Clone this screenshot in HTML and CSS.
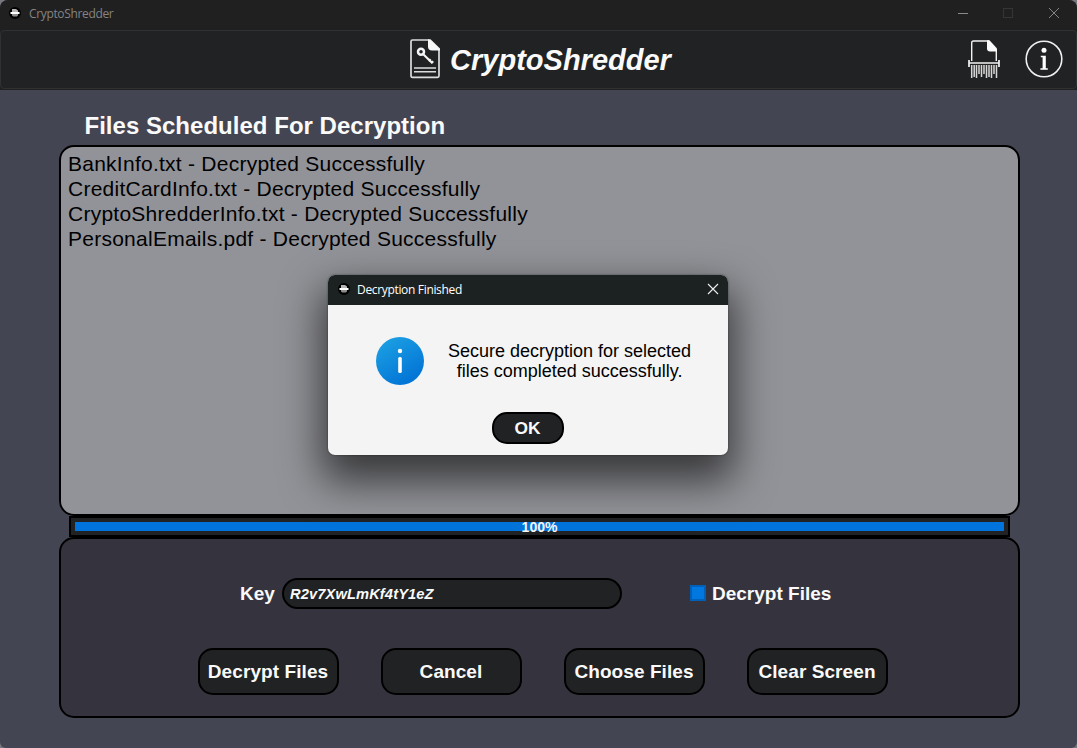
FILE: index.html
```html
<!DOCTYPE html>
<html lang="en">
<head>
<meta charset="utf-8">
<title>CryptoShredder</title>
<link rel="stylesheet" href="styles.css">
</head>
<body>
<svg class="defs" width="0" height="0">
  <symbol id="app-icon" viewBox="0 0 12 12">
    <circle cx="6" cy="6" r="6" fill="#000"/>
    <path d="M3 2h4l2 1.500V5H3z" fill="#b5b5b5"/>
    <path d="M1.500 5h9v2h-9z" fill="#fff"/>
    <path d="M3 7h6v1.500L7.800 9.500H4.200L3 8.500z" fill="#8d8d8d"/>
  </symbol>
</svg>
<div class="window">
  <div class="titlebar">
    <svg class="app-icon"><use href="#app-icon"/></svg>
    <span class="titlebar-text">CryptoShredder</span>
    <svg class="controls" width="104" height="14" viewBox="0 0 104 14" fill="none">
      <path d="M1 7.500h10" stroke="#8a8a8a"/>
      <rect x="46.500" y="2.500" width="9" height="9" stroke="#353535"/>
      <path d="M92 2l10 10M102 2l-10 10" stroke="#858585"/>
    </svg>
  </div>
  <div class="header-wrap">
  <header class="header">
    <div class="brand">
      <svg width="30" height="40" viewBox="0 0 30 40" fill="none">
        <path d="M19 1H2.500Q1 1 1 2.500v34Q1 38.300 2.500 38.300h25q1.500 0 1.500-1.500V11" stroke="#dcdcdc" stroke-width="1.700"/>
        <path d="M18 .3h2.500L30 9.500V11.500h-8q-4 0-4-4z" fill="#f7f7f7"/>
        <circle cx="11" cy="12.800" r="3" stroke="#f4f4f4" stroke-width="2.500"/>
        <path d="M13 15l9.500 9.300M18.700 22.300l2-2M21.200 24.300l2-2" stroke="#f4f4f4" stroke-width="2.100"/>
        <path d="M4 29.100h22M4 32.800h22" stroke="#ddd" stroke-width="1.500"/>
      </svg>
      <h1 class="brand-name">CryptoShredder</h1>
    </div>
    <div class="header-actions">
      <svg width="32" height="38" viewBox="0 0 32 38" fill="none">
        <path d="M3.700 21V3Q3.700 1 5.500 1H21M28.300 10v11" stroke="#f2f2f2" stroke-width="1.400"/>
        <path d="M19 .3h2.500L29 8.500v3h-7q-3 0-3-3z" fill="#fafafa"/>
        <path d="M1 23h30M1 20v7M31 20v7" stroke="#f4f4f4" stroke-width="1.700"/>
        <path d="M3.700 25v13M6.200 25v12M8.500 25v13M11 25v9M13.500 25v12M16 25v9M18.500 25v13M21 25v12M23.500 25v13M26 25v9M28.500 25v13" stroke="#d8d8d8" stroke-width="1.500"/>
      </svg>
      <svg width="38" height="38" viewBox="0 0 38 38" fill="none">
        <circle cx="19" cy="19" r="17.800" stroke="#f0f0f0" stroke-width="1.600"/>
        <circle cx="19" cy="10.200" r="2.500" fill="#fff"/>
        <path d="M15.800 15.800h5v12.500h2v1.500h-7.400v-1.500h2.200V17.300h-1.800z" fill="#fff"/>
      </svg>
    </div>
  </header>
  </div>
  <main class="content">
    <h2 class="heading">Files Scheduled For Decryption</h2>
    <ul class="file-list">
      <li>BankInfo.txt - Decrypted Successfully</li>
      <li>CreditCardInfo.txt - Decrypted Successfully</li>
      <li>CryptoShredderInfo.txt - Decrypted Successfully</li>
      <li>PersonalEmails.pdf - Decrypted Successfully</li>
    </ul>
    <div class="progress"><div class="progress-fill">100%</div></div>
    <section class="panel">
      <div class="key-row">
        <span class="label key-label">Key</span>
        <div class="key-input">R2v7XwLmKf4tY1eZ</div>
        <span class="checkbox"></span>
        <span class="label check-label">Decrypt Files</span>
      </div>
      <div class="buttons">
        <button class="button">Decrypt Files</button>
        <button class="button">Cancel</button>
        <button class="button">Choose Files</button>
        <button class="button">Clear Screen</button>
      </div>
    </section>
  </main>
  <div class="dialog">
    <div class="dialog-title">
      <svg class="app-icon"><use href="#app-icon"/></svg>
      <span class="dialog-name">Decryption Finished</span>
      <svg class="dialog-close" width="12" height="12" viewBox="0 0 12 12"><path d="M1 1l10 10M11 1L1 11" stroke="#eee" stroke-width="1.100"/></svg>
    </div>
    <div class="dialog-body">
      <div class="message">
        <svg width="48" height="48" viewBox="0 0 48 48">
          <defs><linearGradient id="blue" x1=".2" y1="0" x2=".8" y2="1"><stop stop-color="#1ca0e3"/><stop offset="1" stop-color="#0070d4"/></linearGradient></defs>
          <circle cx="24" cy="24" r="24" fill="url(#blue)"/>
          <circle cx="24" cy="14" r="2.200" fill="#fff"/>
          <rect x="22.200" y="20" width="3.600" height="16" rx="1.500" fill="#fff"/>
        </svg>
        <p class="message-text">Secure decryption for selected<br>files completed successfully.</p>
      </div>
      <button class="button ok">OK</button>
    </div>
  </div>
</div>
</body>
</html>
```
FILE: styles.css
```css
* { box-sizing: border-box; }
body { margin: 0; background: #77777d; font-family: "Liberation Sans", Arial, sans-serif; }
h1, h2, p, ul { margin: 0; padding: 0; }
svg { display: block; flex: none; }
.defs { position: absolute; }
.window { position: relative; width: 1077px; height: 748px; overflow: hidden; border-radius: 8px 8px 6px 6px; background: #444552; white-space: nowrap; }
.titlebar { display: flex; align-items: center; height: 30px; padding: 0 16px 4px 9px; background: #202020; }
.app-icon { width: 12px; height: 12px; }
.titlebar-text { margin-left: 8px; font: 12px "Open Sans", sans-serif; letter-spacing: -.35px; color: #848484; }
.controls { margin-left: auto; }
.header-wrap { height: 60px; background: #202020; }
.header { position: relative; display: flex; justify-content: center; height: 59px; padding: 8px 0 0 5px; background: #202224; border: 1px solid #303133; border-radius: 4px; }
.brand { display: flex; gap: 10px; margin-right: 1px; }
.brand-name { font-size: 29px; line-height: 42px; font-style: italic; color: #fafafa; }
.header-actions { position: absolute; right: 13px; top: 9px; display: flex; gap: 25px; }
.content { padding: 20px 57px 0 59px; }
.heading { margin-left: 25.500px; height: 35px; font-size: 24px; letter-spacing: .02px; line-height: 32px; color: #fafafa; }
.file-list { height: 371px; padding: 4px 7px; list-style: none; border: 2px solid #000; border-radius: 15px; background: #929398; font-size: 21px; letter-spacing: .25px; line-height: 25px; color: #000; }
.progress { height: 21px; margin: 0 10px; padding: 4px; background: #202224; border: 2px solid #000; }
.progress-fill { height: 9px; background: #0074dc; color: #f6f6f6; font-size: 14px; font-weight: bold; line-height: 10px; text-align: center; }
.panel { height: 181px; padding: 39px 0 0 137px; background: #35343e; border: 2px solid #000; border-radius: 15px; }
.key-row { display: flex; align-items: center; height: 31px; margin-left: 42px; }
.label { font-size: 19px; font-weight: bold; color: #fafafa; }
.key-label { width: 42px; }
.key-input { width: 340px; height: 31px; padding-left: 6px; border: 2px solid #000; border-radius: 16px; background: #202224; color: #fafafa; font-size: 14.670px; letter-spacing: .12px; font-style: italic; font-weight: bold; line-height: 28px; }
.checkbox { width: 16px; height: 16px; margin: 0 0 1px 68px; background: #0078e0; border: 2px solid #0060b8; }
.check-label { margin-left: 6px; }
.buttons { display: flex; gap: 42px; margin-top: 39px; }
.button { width: 141px; height: 47px; padding: 0 1px 0 0; border: 2px solid #000; border-radius: 15px; background: #202224; color: #fafafa; font: bold 19px "Liberation Sans", Arial, sans-serif; letter-spacing: .08px; }
.dialog { position: absolute; left: 328px; top: 275px; width: 400px; height: 180px; border-radius: 7px; background: #f4f4f4; box-shadow: 0 0 2px rgba(0,0,0,.5), 0 20px 40px 6px rgba(0,0,0,.62); }
.dialog-title { display: flex; align-items: center; height: 30px; padding: 0 9px 2px 10px; border-radius: 7px 7px 0 0; background: #1c2221; }
.dialog-name { margin-left: 7px; font: 12px "Open Sans", sans-serif; letter-spacing: -.33px; color: #fff; }
.dialog-close { margin-left: auto; }
.dialog-body { padding: 32px 0 0 48px; }
.message { display: flex; gap: 24px; }
.message-text { padding-top: 4px; text-align: center; font-size: 18px; line-height: 20px; color: #000; }
.ok { display: block; width: 72px; height: 32px; margin: 27px 0 0 116px; font-size: 17.330px; }
```
